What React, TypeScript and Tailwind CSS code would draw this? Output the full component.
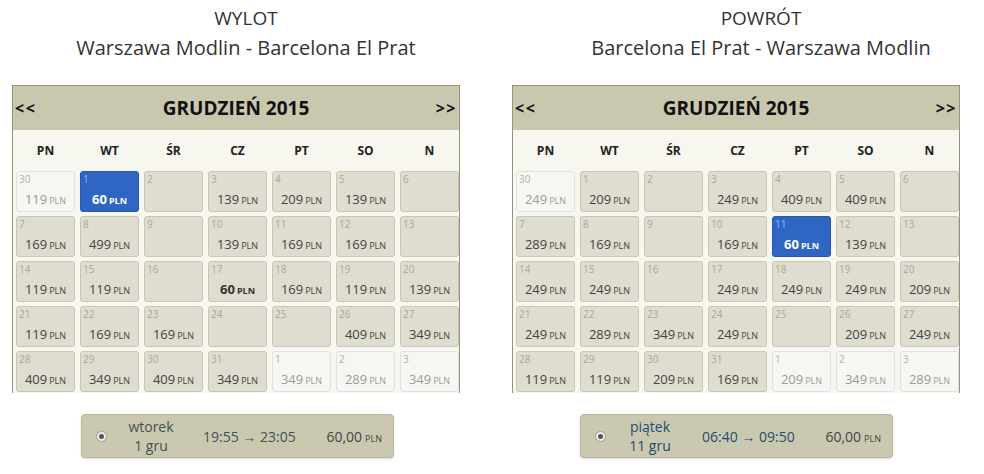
type Cell = { d: number; p?: number; other?: boolean; sel?: boolean; bold?: boolean };

const DAYS = ["PN", "WT", "ŚR", "CZ", "PT", "SO", "N"];

const outbound: Cell[] = [
  { d: 30, p: 119, other: true }, { d: 1, p: 60, sel: true }, { d: 2 }, { d: 3, p: 139 }, { d: 4, p: 209 }, { d: 5, p: 139 }, { d: 6 },
  { d: 7, p: 169 }, { d: 8, p: 499 }, { d: 9 }, { d: 10, p: 139 }, { d: 11, p: 169 }, { d: 12, p: 169 }, { d: 13 },
  { d: 14, p: 119 }, { d: 15, p: 119 }, { d: 16 }, { d: 17, p: 60, bold: true }, { d: 18, p: 169 }, { d: 19, p: 119 }, { d: 20, p: 139 },
  { d: 21, p: 119 }, { d: 22, p: 169 }, { d: 23, p: 169 }, { d: 24 }, { d: 25 }, { d: 26, p: 409 }, { d: 27, p: 349 },
  { d: 28, p: 409 }, { d: 29, p: 349 }, { d: 30, p: 409 }, { d: 31, p: 349 }, { d: 1, p: 349, other: true }, { d: 2, p: 289, other: true }, { d: 3, p: 349, other: true },
];

const inbound: Cell[] = [
  { d: 30, p: 249, other: true }, { d: 1, p: 209 }, { d: 2 }, { d: 3, p: 249 }, { d: 4, p: 409 }, { d: 5, p: 409 }, { d: 6 },
  { d: 7, p: 289 }, { d: 8, p: 169 }, { d: 9 }, { d: 10, p: 169 }, { d: 11, p: 60, sel: true }, { d: 12, p: 139 }, { d: 13 },
  { d: 14, p: 249 }, { d: 15, p: 249 }, { d: 16 }, { d: 17, p: 249 }, { d: 18, p: 249 }, { d: 19, p: 249 }, { d: 20, p: 209 },
  { d: 21, p: 249 }, { d: 22, p: 289 }, { d: 23, p: 349 }, { d: 24, p: 249 }, { d: 25 }, { d: 26, p: 209 }, { d: 27, p: 249 },
  { d: 28, p: 119 }, { d: 29, p: 119 }, { d: 30, p: 209 }, { d: 31, p: 169 }, { d: 1, p: 209, other: true }, { d: 2, p: 349, other: true }, { d: 3, p: 289, other: true },
];

function DayCell({ c }: { c: Cell }) {
  let box = "bg-[#dfddcf] border-[#c8c6b4]";
  let num = "text-[#a9a89c]";
  let price = "text-[#444]";
  if (c.other) {
    box = "bg-[#f7f7f1] border-[#dbe2ec]";
    price = "text-[#9a9a9a]";
    num = "text-[#b0b0b0]";
  }
  if (c.sel) {
    box = "bg-[#2f66c3] border-[#2958ac]";
    num = "text-[#9db5df]";
    price = "text-white font-bold";
  }
  if (c.bold) price = "text-[#333] font-bold";

  return (
    <div className={`h-[41px] rounded-[3px] border flex flex-col ${box}`}>
      <div className={`text-[10px] leading-[12px] pl-[2px] pt-[1px] ${num}`}>{c.d}</div>
      {c.p !== undefined && (
        <div className={`mt-[6px] text-center text-[13px] leading-[16px] ${price}`}>
          {c.p}
          <span className="text-[9px] ml-[2px]">PLN</span>
        </div>
      )}
    </div>
  );
}

function Calendar({ cells }: { cells: Cell[] }) {
  return (
    <div className="ml-[12px] w-[448px] border-t border-x border-[#959378] bg-[#f7f6ef]">
      <div className="h-[44px] bg-[#c9c8af] flex items-center justify-between px-[2px] text-[#111]">
        <span className="text-[16px] font-bold tracking-[1.5px]">&lt;&lt;</span>
        <span className="text-[19px] font-bold">GRUDZIEŃ 2015</span>
        <span className="text-[16px] font-bold tracking-[1.5px]">&gt;&gt;</span>
      </div>
      <div className="h-[41px] grid grid-cols-[repeat(7,59px)] gap-x-[5px] pl-[3px] items-center text-center">
        {DAYS.map((d) => (
          <span key={d} className="text-[12px] font-bold text-[#222]">
            {d}
          </span>
        ))}
      </div>
      <div className="grid grid-cols-[repeat(7,59px)] gap-x-[5px] gap-y-[4px] pl-[3px] pb-[1px]">
        {cells.map((c, i) => (
          <DayCell key={i} c={c} />
        ))}
      </div>
    </div>
  );
}

function FlightBar({ day, date, time, color, className }: { day: string; date: string; time: string; color: string; className: string }) {
  return (
    <div className={`h-[44px] w-[313px] rounded-[4px] border border-[#b8b69c] bg-[#cac9af] shadow-[0_1px_2px_rgba(0,0,0,0.15)] flex items-center text-[14px] ${className}`}>
      <div className="w-[38px] flex justify-center">
        <div className="w-[11px] h-[11px] rounded-full bg-[#eeeeee] border border-[#9a9a9a] flex items-center justify-center">
          <div className="w-[5px] h-[5px] rounded-full bg-[#555]" />
        </div>
      </div>
      <div className={`w-[62px] text-center leading-[19px] ${color}`}>
        {day}
        <br />
        {date}
      </div>
      <div className={`ml-[21px] ${color}`}>{time}</div>
      <div className="ml-auto pr-[11px] text-[#444]">
        60,00<span className="text-[9px] ml-[3px]">PLN</span>
      </div>
    </div>
  );
}

export default function App() {
  return (
    <div className="w-[984px] h-[474px] bg-white flex overflow-hidden [font-family:'Open_Sans',sans-serif] text-[#333]">
      <div className="w-[500px] shrink-0">
        <div className="w-[492px] text-center pt-[4px] leading-[29px]">
          <div className="text-[19px]">WYLOT</div>
          <div className="text-[20px]">Warszawa Modlin - Barcelona El Prat</div>
        </div>
        <div className="mt-[23px]">
          <Calendar cells={outbound} />
        </div>
        <FlightBar className="mt-[21px] ml-[81px]" day="wtorek" date="1 gru" time="19:55 → 23:05" color="text-[#454f59]" />
      </div>
      <div className="w-[484px] shrink-0">
        <div className="w-[492px] pl-[30px] text-center pt-[4px] leading-[29px]">
          <div className="text-[19px]">POWRÓT</div>
          <div className="text-[20px]">Barcelona El Prat - Warszawa Modlin</div>
        </div>
        <div className="mt-[23px]">
          <Calendar cells={inbound} />
        </div>
        <FlightBar className="mt-[21px] ml-[80px]" day="piątek" date="11 gru" time="06:40 → 09:50" color="text-[#254a70]" />
      </div>
    </div>
  );
}
